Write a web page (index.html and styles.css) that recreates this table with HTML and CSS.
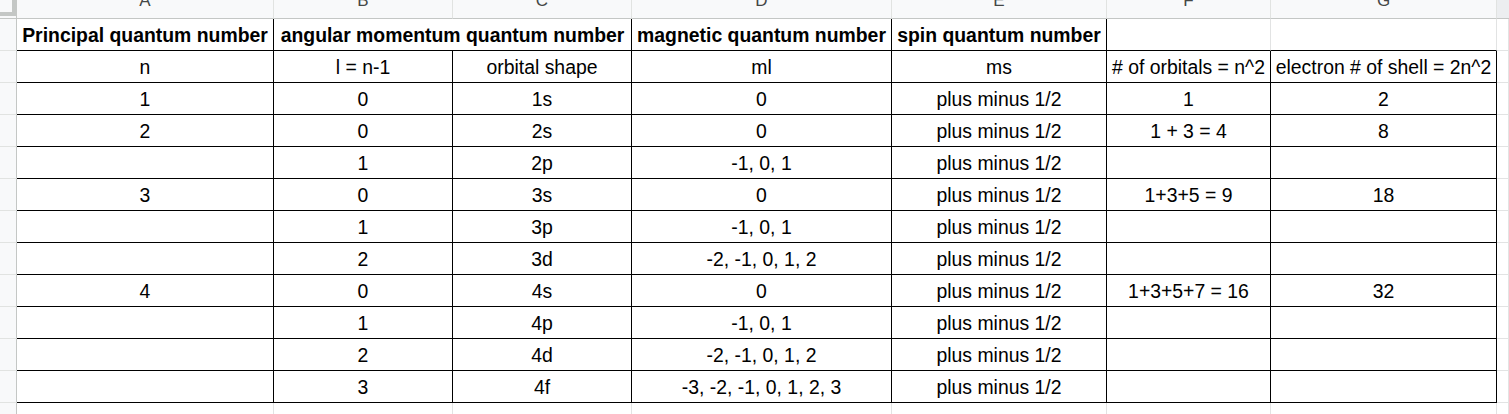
FILE: index.html
```html
<!DOCTYPE html>
<html lang="en">
<head>
    <meta charset="UTF-8">
    <meta name="viewport" content="width=device-width, initial-scale=1.0">
    <title>Quantum Numbers</title>
    <link rel="stylesheet" href="styles.css">
</head>
<body>
    <table class="sheet">
        <colgroup>
            <col class="w-rh">
            <col class="w-a">
            <col class="w-b">
            <col class="w-c">
            <col class="w-d">
            <col class="w-e">
            <col class="w-f">
            <col class="w-g">
            <col class="w-x">
        </colgroup>
        <tr class="col-head">
            <td class="corner"><div class="freeze"></div></td>
            <td><div class="letter"><span>A</span></div></td>
            <td><div class="letter"><span>B</span></div></td>
            <td><div class="letter"><span>C</span></div></td>
            <td><div class="letter"><span>D</span></div></td>
            <td><div class="letter"><span>E</span></div></td>
            <td><div class="letter"><span>F</span></div></td>
            <td><div class="letter"><span>G</span></div></td>
            <td class="more"></td>
        </tr>
        <tr class="bold">
            <td class="rh"></td>
            <td class="b">Principal quantum number</td>
            <td class="b" colspan="2">angular momentum quantum number</td>
            <td class="b">magnetic quantum number</td>
            <td class="b">spin quantum number</td>
            <td class="open"></td>
            <td class="open"></td>
            <td class="g"></td>
        </tr>
        <tr>
            <td class="rh"></td>
            <td class="b">n</td>
            <td class="b">l = n-1</td>
            <td class="b">orbital shape</td>
            <td class="b">ml</td>
            <td class="b">ms</td>
            <td class="b"># of orbitals = n^2</td>
            <td class="b">electron # of shell = 2n^2</td>
            <td class="g"></td>
        </tr>
        <tr>
            <td class="rh"></td>
            <td class="b">1</td>
            <td class="b">0</td>
            <td class="b">1s</td>
            <td class="b">0</td>
            <td class="b">plus minus 1/2</td>
            <td class="b">1</td>
            <td class="b">2</td>
            <td class="g"></td>
        </tr>
        <tr>
            <td class="rh"></td>
            <td class="b">2</td>
            <td class="b">0</td>
            <td class="b">2s</td>
            <td class="b">0</td>
            <td class="b">plus minus 1/2</td>
            <td class="b">1 + 3 = 4</td>
            <td class="b">8</td>
            <td class="g"></td>
        </tr>
        <tr>
            <td class="rh"></td>
            <td class="b"></td>
            <td class="b">1</td>
            <td class="b">2p</td>
            <td class="b">-1, 0, 1</td>
            <td class="b">plus minus 1/2</td>
            <td class="b"></td>
            <td class="b"></td>
            <td class="g"></td>
        </tr>
        <tr>
            <td class="rh"></td>
            <td class="b">3</td>
            <td class="b">0</td>
            <td class="b">3s</td>
            <td class="b">0</td>
            <td class="b">plus minus 1/2</td>
            <td class="b">1+3+5 = 9</td>
            <td class="b">18</td>
            <td class="g"></td>
        </tr>
        <tr>
            <td class="rh"></td>
            <td class="b"></td>
            <td class="b">1</td>
            <td class="b">3p</td>
            <td class="b">-1, 0, 1</td>
            <td class="b">plus minus 1/2</td>
            <td class="b"></td>
            <td class="b"></td>
            <td class="g"></td>
        </tr>
        <tr>
            <td class="rh"></td>
            <td class="b"></td>
            <td class="b">2</td>
            <td class="b">3d</td>
            <td class="b">-2, -1, 0, 1, 2</td>
            <td class="b">plus minus 1/2</td>
            <td class="b"></td>
            <td class="b"></td>
            <td class="g"></td>
        </tr>
        <tr>
            <td class="rh"></td>
            <td class="b">4</td>
            <td class="b">0</td>
            <td class="b">4s</td>
            <td class="b">0</td>
            <td class="b">plus minus 1/2</td>
            <td class="b">1+3+5+7 = 16</td>
            <td class="b">32</td>
            <td class="g"></td>
        </tr>
        <tr>
            <td class="rh"></td>
            <td class="b"></td>
            <td class="b">1</td>
            <td class="b">4p</td>
            <td class="b">-1, 0, 1</td>
            <td class="b">plus minus 1/2</td>
            <td class="b"></td>
            <td class="b"></td>
            <td class="g"></td>
        </tr>
        <tr>
            <td class="rh"></td>
            <td class="b"></td>
            <td class="b">2</td>
            <td class="b">4d</td>
            <td class="b">-2, -1, 0, 1, 2</td>
            <td class="b">plus minus 1/2</td>
            <td class="b"></td>
            <td class="b"></td>
            <td class="g"></td>
        </tr>
        <tr>
            <td class="rh"></td>
            <td class="b"></td>
            <td class="b">3</td>
            <td class="b">4f</td>
            <td class="b">-3, -2, -1, 0, 1, 2, 3</td>
            <td class="b">plus minus 1/2</td>
            <td class="b"></td>
            <td class="b"></td>
            <td class="g"></td>
        </tr>
        <tr class="tail">
            <td class="rh"></td>
            <td class="g"></td>
            <td class="g"></td>
            <td class="g"></td>
            <td class="g"></td>
            <td class="g"></td>
            <td class="g"></td>
            <td class="g"></td>
            <td class="g"></td>
        </tr>
    </table>
</body>
</html>
```

FILE: styles.css
```css
* {
    box-sizing: border-box;
}
html, body {
    margin: 0;
    padding: 0;
    overflow: hidden;
    background-color: #fff;
}
body {
    font-family: "Liberation Sans", Arial, sans-serif;
    font-size: 19.4px;
    color: #000;
}
.sheet {
    border-collapse: separate;
    border-spacing: 0;
    table-layout: fixed;
    width: 1509px;
}
.w-rh { width: 17px; }
.w-a { width: 257px; }
.w-b { width: 179px; }
.w-c { width: 179px; }
.w-d { width: 260px; }
.w-e { width: 215px; }
.w-f { width: 164px; }
.w-g { width: 226px; }
.w-x { width: 12px; }

.sheet td {
    padding: 0 2px 3px;
    height: 32px;
    text-align: center;
    vertical-align: bottom;
    white-space: nowrap;
}
.sheet tr.bold td {
    font-weight: bold;
}
.sheet tr.tail td {
    height: 11px;
    padding: 0;
    border-bottom: none;
}

/* column letters strip, scrolled so only the lower part shows */
.col-head td {
    height: 19px;
    padding: 0;
    background-color: #f8f9fa;
    border-right: 1px solid #e1e3e1;
    border-bottom: 1px solid #c4c7c5;
    vertical-align: top;
}
.col-head td.more {
    background-color: #eceef0;
    border-right: none;
}
.letter {
    height: 18px;
    overflow: hidden;
}
.letter span {
    display: block;
    margin-top: -9px;
    line-height: 20px;
    font-size: 17px;
    color: #444746;
}
.col-head td.corner {
    border-right: 1px solid #c4c7c5;
}
.freeze {
    width: 16px;
    height: 16px;
    border-right: 4px solid #c4c7c5;
    border-bottom: 4px solid #c4c7c5;
}

/* row number strip */
.sheet td.rh {
    padding: 0;
    background-color: #f8f9fa;
    border-right: 1px solid #c4c7c5;
    border-bottom: 1px solid #e1e3e1;
}

/* bordered cells */
.sheet td.b {
    border-right: 1px solid #000;
    border-bottom: 1px solid #000;
}
/* plain gridlines */
.sheet td.g {
    border-right: 1px solid #e2e3e3;
    border-bottom: 1px solid #e2e3e3;
}
/* empty header cells sitting on top of the bordered block */
.sheet td.open {
    border-right: 1px solid #e2e3e3;
    border-bottom: 1px solid #000;
}
```
